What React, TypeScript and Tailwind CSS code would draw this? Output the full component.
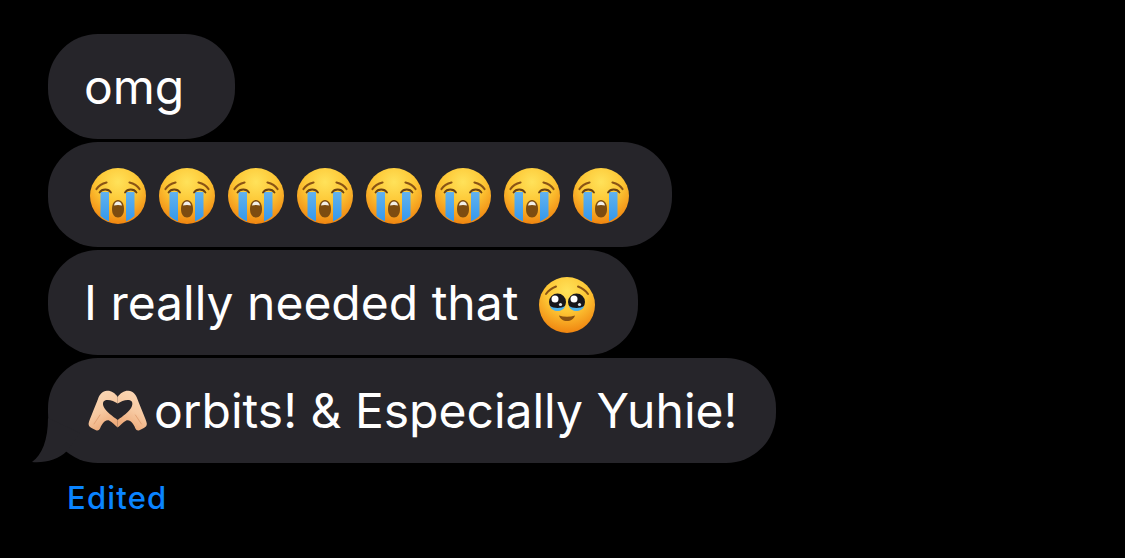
function LoudlyCrying({ id }: { id: string }) {
  return (
    <svg viewBox="0 0 58 58" className="w-[58px] h-[58px] shrink-0 mt-[2px]">
      <defs>
        <radialGradient id={`face-${id}`} cx="50%" cy="25%" r="75%">
          <stop offset="0%" stopColor="#ffe25a" />
          <stop offset="50%" stopColor="#fdc634" />
          <stop offset="100%" stopColor="#f08510" />
        </radialGradient>
        <linearGradient id={`tear-${id}`} x1="0" y1="0" x2="0" y2="1">
          <stop offset="0%" stopColor="#62b2ee" />
          <stop offset="100%" stopColor="#3498ec" />
        </linearGradient>
      </defs>
      <circle cx="29" cy="29" r="28" fill={`url(#face-${id})`} />
      <path d="M11.500 25h8.500v29.500q-4.500-2-8.500-5.500z" fill={`url(#tear-${id})`} />
      <path d="M37 25h8.500v24q-4 3.500-8.500 5.500z" fill={`url(#tear-${id})`} />
      <path d="M10.500 25.500c2.500-4 9-4 11.500 0M36 25.500c2.500-4 9-4 11.500 0" fill="none" stroke="#6b4212" strokeWidth="1.800" strokeLinecap="round" />
      <path d="M7.500 22c2-3 5.500-5.500 10-6.500M40.500 15.500c4.500 1 8 3.500 10 6.500" fill="none" stroke="#8a5415" strokeWidth="2.200" strokeLinecap="round" />
      <path d="M23 42c0-5.500 2.500-9 6-9s6 3.500 6 9-2.500 8.500-6 8.500-6-3-6-8.500z" fill="#7d4c10" />
      <path d="M25 38.500c.5-2.500 2-4 4-4s3.500 1.500 4 4c-2.500-.8-5.500-.8-8 0z" fill="#f2efe8" />
    </svg>
  );
}

function Pleading() {
  return (
    <svg viewBox="0 0 58 58" className="w-[58px] h-[58px] shrink-0 mt-[4px]">
      <defs>
        <radialGradient id="face-plead" cx="50%" cy="25%" r="75%">
          <stop offset="0%" stopColor="#ffe25a" />
          <stop offset="50%" stopColor="#fdc634" />
          <stop offset="100%" stopColor="#f08510" />
        </radialGradient>
      </defs>
      <circle cx="29" cy="29" r="28" fill="url(#face-plead)" />
      <path d="M8 18c2.500-3.500 6-6 10-7.500M40 10.500c4 1.500 7.500 4 10 7.500" fill="none" stroke="#8a5415" strokeWidth="2" strokeLinecap="round" />
      <circle cx="19.500" cy="26" r="8.500" fill="#17161b" />
      <circle cx="38.500" cy="26" r="8.500" fill="#17161b" />
      <path d="M12 30c3 2.500 12 2.500 15 0-1 3.500-4 5-7.500 5s-6.500-1.500-7.500-5zM31 30c3 2.500 12 2.500 15 0-1 3.500-4 5-7.500 5s-6.500-1.500-7.500-5z" fill="#4fb2ea" />
      <circle cx="17" cy="23" r="3.500" fill="#fff" />
      <circle cx="36" cy="23" r="3.500" fill="#fff" />
      <circle cx="22.500" cy="28.500" r="1.600" fill="#dfe6ea" />
      <circle cx="41.500" cy="28.500" r="1.600" fill="#dfe6ea" />
      <path d="M21 39.500c5 1.600 11 1.600 16 0-1 3.500-4.200 5.500-8 5.500s-7-2-8-5.500z" fill="#8a5212" />
    </svg>
  );
}

const handPath =
  "M29.700 7C27 3 23 .5 19 .8 14.500 1.200 11.500 4.500 10 9 8 14 5.500 20 4 24 2.500 28 1 31 .6 33.500.4 35.500 1.500 37 4 38.200l4 2c1.800.7 3.200 0 4-1.700C13 36 14.500 33 16.500 31.500c2-1.200 3.500-1.400 5-.8 2.500 1.500 5.500 4.500 8.200 6.800V30C25 26.500 18 21.500 15.800 17 14 13 15.500 10.300 18.500 10c3.800-.4 8 1.200 11.200 3.500z";

function HeartHands() {
  return (
    <svg viewBox="0 0 60 42" className="w-[60px] h-[42px] shrink-0">
      <defs>
        <linearGradient id="hand" x1="0" y1="0" x2="0.4" y2="1">
          <stop offset="0%" stopColor="#fbdcbc" />
          <stop offset="60%" stopColor="#f7c9a1" />
          <stop offset="100%" stopColor="#eeac7c" />
        </linearGradient>
      </defs>
      <path d={handPath} fill="url(#hand)" />
      <g transform="translate(59.400) scale(-1 1)">
        <path d={handPath} fill="url(#hand)" />
      </g>
      <path d="M6 34l6-9M53.400 34l-6-9" fill="none" stroke="#e3a275" strokeWidth="1" strokeLinecap="round" />
    </svg>
  );
}

const bubble = "flex items-center h-[105px] rounded-[50px] bg-[#26252a] text-white text-[48px] leading-none";

export default function App() {
  return (
    <div className="w-[1125px] h-[558px] bg-black overflow-hidden pt-[34px] pl-[48px] font-['Inter',sans-serif]">
      <div className="flex flex-col gap-[3px]">
        <div className={`${bubble} w-[187px] pl-[36px]`}>omg</div>
        <div className={`${bubble} w-[624px] pl-[41px] gap-[11px]`}>
          {[1, 2, 3, 4, 5, 6, 7, 8].map((n) => (
            <LoudlyCrying key={n} id={String(n)} />
          ))}
        </div>
        <div className={`${bubble} w-[590px] pl-[36px] gap-[20px]`}>
          <span>I really needed that</span>
          <Pleading />
        </div>
        <div className={`${bubble} relative w-[728px] pl-[40px] gap-[6px]`}>
          <HeartHands />
          <span>orbits! & Especially Yuhie!</span>
          {/* tail */}
          <svg viewBox="0 0 50 50" className="absolute left-[-16px] bottom-0 w-[50px] h-[50px]">
            <path d="M16 5C16 27 10 42 0 49c13 1 26-2 35-11L48 20z" fill="#26252a" />
          </svg>
        </div>
      </div>
      <p className="mt-[17px] ml-[19px] text-[31px] leading-[36px] tracking-[1.2px] font-medium text-[#0a84ff]">Edited</p>
    </div>
  );
}
